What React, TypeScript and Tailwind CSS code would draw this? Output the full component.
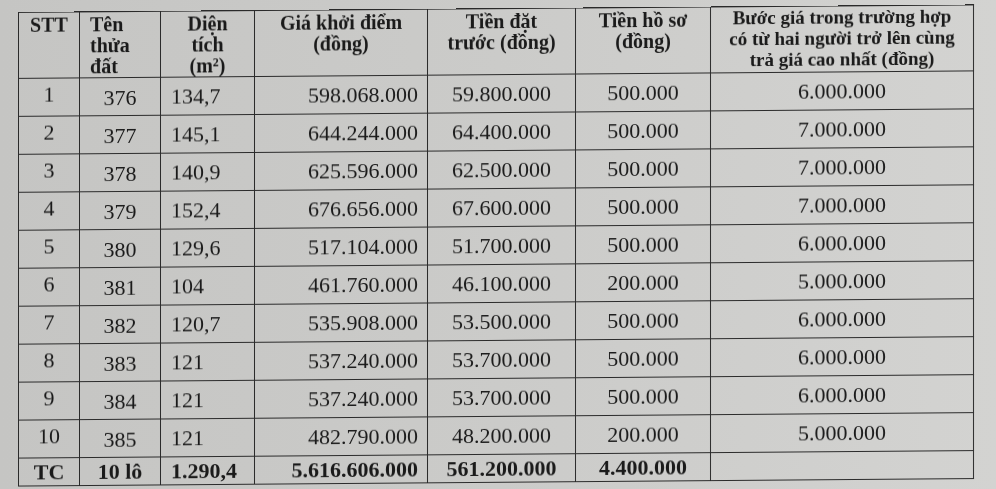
import React from "react";

const rows: string[][] = [
  ["1", "376", "134,7", "598.068.000", "59.800.000", "500.000", "6.000.000"],
  ["2", "377", "145,1", "644.244.000", "64.400.000", "500.000", "7.000.000"],
  ["3", "378", "140,9", "625.596.000", "62.500.000", "500.000", "7.000.000"],
  ["4", "379", "152,4", "676.656.000", "67.600.000", "500.000", "7.000.000"],
  ["5", "380", "129,6", "517.104.000", "51.700.000", "500.000", "6.000.000"],
  ["6", "381", "104", "461.760.000", "46.100.000", "200.000", "5.000.000"],
  ["7", "382", "120,7", "535.908.000", "53.500.000", "500.000", "6.000.000"],
  ["8", "383", "121", "537.240.000", "53.700.000", "500.000", "6.000.000"],
  ["9", "384", "121", "537.240.000", "53.700.000", "500.000", "6.000.000"],
  ["10", "385", "121", "482.790.000", "48.200.000", "200.000", "5.000.000"],
];

const cell = "border-[1.5px] border-[#2a2a2a] p-0";

export default function App() {
  return (
    <div
      className="w-full h-[489px] overflow-hidden bg-gradient-to-r from-[#c5c5c3] via-[#cbcbc9] to-[#d3d3d1] text-[#1a1a1a] [perspective:1000px]"
      style={{ fontFamily: '"Liberation Serif", "Times New Roman", serif' }}
    >
      <div className="pl-[18px] pt-[8px]">
        <table className="table-fixed border-collapse w-[955px] [transform:rotateX(2.3deg)_skewY(-0.45deg)]">
          <colgroup>
            <col className="w-[61px]" />
            <col className="w-[81px]" />
            <col className="w-[94px]" />
            <col className="w-[173px]" />
            <col className="w-[148px]" />
            <col className="w-[135px]" />
            <col className="w-[263px]" />
          </colgroup>
          <thead>
            <tr className="h-[66px] text-[20px] leading-[21px] font-bold align-top">
              <th className={`${cell} pt-[2px] text-center`}>STT</th>
              <th className={`${cell} pt-[2px] pl-[10px] text-left`}>
                Tên
                <br />
                thửa
                <br />
                đất
              </th>
              <th className={`${cell} pt-[2px] text-center`}>
                Diện
                <br />
                tích
                <br />
                (m<sup className="text-[12px]">2</sup>)
              </th>
              <th className={`${cell} pt-[2px] text-center`}>
                Giá khởi điểm
                <br />
                (đồng)
              </th>
              <th className={`${cell} pt-[2px] text-center`}>
                Tiền đặt
                <br />
                trước (đồng)
              </th>
              <th className={`${cell} pt-[2px] text-center`}>
                Tiền hồ sơ
                <br />
                (đồng)
              </th>
              <th className={`${cell} pt-0 text-center text-[19px] leading-[21px]`}>
                Bước giá trong trường hợp
                <br />
                có từ hai người trở lên cùng
                <br />
                trả giá cao nhất (đồng)
              </th>
            </tr>
          </thead>
          <tbody className="text-[22px] leading-[24px]">
            {rows.map((r) => (
              <tr key={r[0]} className="h-[38px] align-middle">
                <td className={`${cell} text-center pb-[6px]`}>{r[0]}</td>
                <td className={`${cell} text-center pt-[2px]`}>{r[1]}</td>
                <td className={`${cell} text-left pl-[10px]`}>{r[2]}</td>
                <td className={`${cell} text-right pr-[9px]`}>{r[3]}</td>
                <td className={`${cell} text-center`}>{r[4]}</td>
                <td className={`${cell} text-center`}>{r[5]}</td>
                <td className={`${cell} text-center`}>{r[6]}</td>
              </tr>
            ))}
            <tr className="h-[28px] font-bold align-middle">
              <td className={`${cell} text-center`}>TC</td>
              <td className={`${cell} text-center`}>10 lô</td>
              <td className={`${cell} text-left pl-[10px]`}>1.290,4</td>
              <td className={`${cell} text-right pr-[9px]`}>5.616.606.000</td>
              <td className={`${cell} text-center`}>561.200.000</td>
              <td className={`${cell} text-center`}>4.400.000</td>
              <td className={`${cell}`}></td>
            </tr>
          </tbody>
        </table>
      </div>
    </div>
  );
}
